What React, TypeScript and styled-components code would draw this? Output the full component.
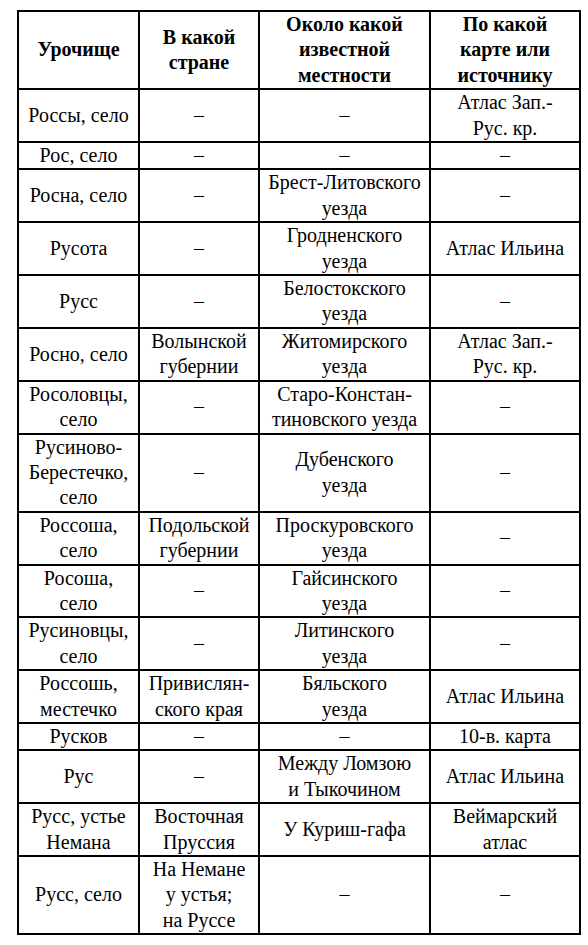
import React from "react";
import styled, { createGlobalStyle } from "styled-components";

const GlobalStyle = createGlobalStyle`
  body {
    margin: 0;
    background: #fff;
  }
`;

type Row = string[][];

const header: Row = [
  ["Урочище"],
  ["В какой", "стране"],
  ["Около какой", "известной", "местности"],
  ["По какой", "карте или", "источнику"],
];

const D = ["–"];

const rows: Row[] = [
  [["Россы, село"], D, D, ["Атлас Зап.-", "Рус. кр."]],
  [["Рос, село"], D, D, D],
  [["Росна, село"], D, ["Брест-Литовского", "уезда"], D],
  [["Русота"], D, ["Гродненского", "уезда"], ["Атлас Ильина"]],
  [["Русс"], D, ["Белостокского", "уезда"], D],
  [["Росно, село"], ["Волынской", "губернии"], ["Житомирского", "уезда"], ["Атлас Зап.-", "Рус. кр."]],
  [["Росоловцы,", "село"], D, ["Старо-Констан-", "тиновского уезда"], D],
  [["Русиново-", "Берестечко,", "село"], D, ["Дубенского", "уезда"], D],
  [["Россоша,", "село"], ["Подольской", "губернии"], ["Проскуровского", "уезда"], D],
  [["Росоша,", "село"], D, ["Гайсинского", "уезда"], D],
  [["Русиновцы,", "село"], D, ["Литинского", "уезда"], D],
  [["Россошь,", "местечко"], ["Привислян-", "ского края"], ["Бяльского", "уезда"], ["Атлас Ильина"]],
  [["Русков"], D, D, ["10-в. карта"]],
  [["Рус"], D, ["Между Ломзою", "и Тыкочином"], ["Атлас Ильина"]],
  [["Русс, устье", "Немана"], ["Восточная", "Пруссия"], ["У Куриш-гафа"], ["Веймарский", "атлас"]],
  [["Русс, село"], ["На Немане", "у устья;", "на Руссе"], D, D],
];

const families = [
  '"Liberation Serif", serif',
  "Tinos, serif",
  '"Times New Roman", serif',
  "serif",
];

const Page = styled.div`
  padding: 10px 0 0 17px;
`;

const Grid = styled.div`
  display: grid;
  grid-template-columns: 121px 120px 171px 150px;
  width: max-content;
  border-top: 2px solid #000;
  border-left: 2px solid #000;
`;

const Cell = styled.div<{ $col: number; $head?: boolean }>`
  display: flex;
  flex-direction: column;
  align-items: center;
  justify-content: center;
  border-right: 2px solid #000;
  border-bottom: 2px solid #000;
  color: #000;
  text-align: center;
  white-space: nowrap;
  font: ${(p) => (p.$head ? 700 : 400)} 20px / 25.4px ${(p) => families[p.$col]};
`;

const App = () => (
  <Page>
    <GlobalStyle />
    <Grid>
      {header.map((c, i) => (
        <Cell $head $col={i} key={`h${i}`}>
          {c.map((l, k) => (
            <div key={k}>{l}</div>
          ))}
        </Cell>
      ))}
      {rows.map((r, i) =>
        r.map((c, j) => (
          <Cell $col={j} key={`${i}-${j}`}>
            {c.map((l, k) => (
              <div key={k}>{l}</div>
            ))}
          </Cell>
        ))
      )}
    </Grid>
  </Page>
);

export default App;
